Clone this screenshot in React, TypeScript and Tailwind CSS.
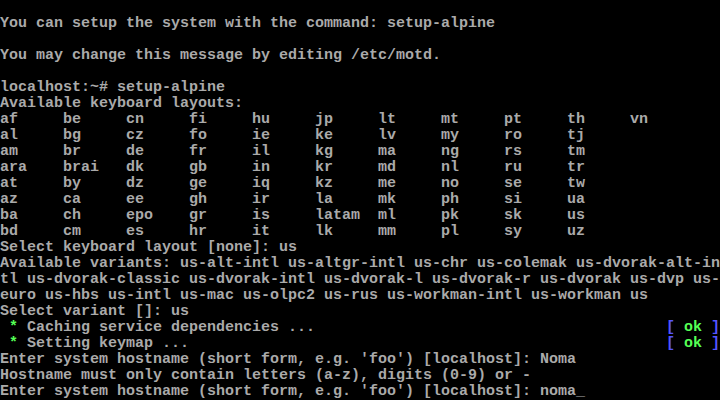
const layouts = [
  ["af", "be", "cn", "fi", "hu", "jp", "lt", "mt", "pt", "th", "vn"],
  ["al", "bg", "cz", "fo", "ie", "ke", "lv", "my", "ro", "tj"],
  ["am", "br", "de", "fr", "il", "kg", "ma", "ng", "rs", "tm"],
  ["ara", "brai", "dk", "gb", "in", "kr", "md", "nl", "ru", "tr"],
  ["at", "by", "dz", "ge", "iq", "kz", "me", "no", "se", "tw"],
  ["az", "ca", "ee", "gh", "ir", "la", "mk", "ph", "si", "ua"],
  ["ba", "ch", "epo", "gr", "is", "latam", "ml", "pk", "sk", "us"],
  ["bd", "cm", "es", "hr", "it", "lk", "mm", "pl", "sy", "uz"],
];

// one console row = 16px, one cell = 9px
const Line = ({ children }: { children?: React.ReactNode }) => (
  <div className="h-4 whitespace-pre">{children}</div>
);

const Ok = ({ text }: { text: string }) => (
  <div className="h-4 whitespace-pre flex justify-between">
    <span>
      <span className="text-[#55ff55]"> *</span> {text}
    </span>
    <span>
      <span className="text-[#5555ff]">[</span>
      <span className="text-[#55ff55]"> ok </span>
      <span className="text-[#5555ff]">]</span>
    </span>
  </div>
);

export default function App() {
  return (
    <div
      className="w-[720px] h-[400px] overflow-hidden bg-black text-[#aaaaaa] text-[15px] leading-4 font-bold"
      style={{ fontFamily: '"Liberation Mono", "DejaVu Sans Mono", monospace' }}
    >
      <Line />
      <Line>You can setup the system with the command: setup-alpine</Line>
      <Line />
      <Line>You may change this message by editing /etc/motd.</Line>
      <Line />
      <Line>localhost:~# setup-alpine</Line>
      <Line>Available keyboard layouts:</Line>
      {layouts.map((row, i) => (
        <div key={i} className="h-4 grid grid-cols-[repeat(11,63px)]">
          {row.map((l) => (
            <span key={l} className="whitespace-pre">
              {l}
            </span>
          ))}
        </div>
      ))}
      <Line>Select keyboard layout [none]: us</Line>
      <Line>Available variants: us-alt-intl us-altgr-intl us-chr us-colemak us-dvorak-alt-in</Line>
      <Line>tl us-dvorak-classic us-dvorak-intl us-dvorak-l us-dvorak-r us-dvorak us-dvp us-</Line>
      <Line>euro us-hbs us-intl us-mac us-olpc2 us-rus us-workman-intl us-workman us</Line>
      <Line>Select variant []: us</Line>
      <Ok text="Caching service dependencies ..." />
      <Ok text="Setting keymap ..." />
      <Line>Enter system hostname (short form, e.g. 'foo') [localhost]: Noma</Line>
      <Line>Hostname must only contain letters (a-z), digits (0-9) or -</Line>
      <Line>Enter system hostname (short form, e.g. 'foo') [localhost]: noma_</Line>
    </div>
  );
}
